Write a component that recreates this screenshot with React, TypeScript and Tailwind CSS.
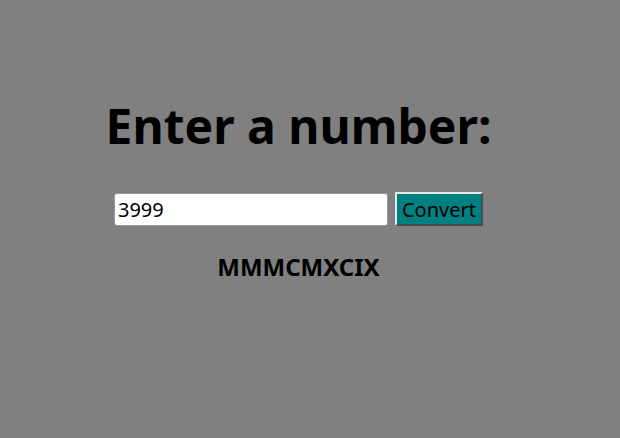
import React from "react";

export default function App() {
  return (
    <div className="w-[620px] h-[438px] bg-[#808080] overflow-hidden" style={{ fontFamily: '"Noto Sans", sans-serif' }}>
      <div className="w-[597px] flex flex-col items-center pt-[94px]">
        <h1 className="text-[48px] font-bold leading-[64px] text-black">Enter a number:</h1>
        <div className="mt-[34px] flex items-center gap-[7px]">
          <input
            defaultValue="3999"
            className="w-[274px] h-[33px] bg-white border border-[#9a9aa6] rounded-[3px] px-[3px] text-[20px] text-black outline-none"
            style={{ fontFamily: '"Noto Sans", sans-serif' }}
          />
          <button
            className="h-[34px] px-[5px] pt-[2px] bg-[#008080] border-2 [border-style:outset] border-t-[#e6e6e6] border-l-[#e6e6e6] border-r-[#a0a0a0] border-b-[#a0a0a0] text-[20px] leading-[28px] text-black"
            style={{ fontFamily: '"Noto Sans", sans-serif' }}
          >
            Convert
          </button>
        </div>
        <p className="mt-[25px] text-[24px] font-bold text-black leading-[32px]">MMMCMXCIX</p>
      </div>
    </div>
  );
}
